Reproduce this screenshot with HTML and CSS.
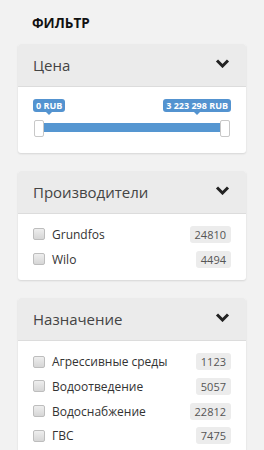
FILE: index.html
```html
<!DOCTYPE html>
<html lang="ru">
<head>
    <meta charset="UTF-8">
    <meta name="viewport" content="width=device-width, initial-scale=1.0">
    <title>Фильтр</title>
    <link rel="stylesheet" href="styles.css">
</head>
<body>
    <div class="filter">
        <h2 class="filter-title">ФИЛЬТР</h2>

        <div class="panel">
            <div class="panel-head">
                <span>Цена</span>
                <svg class="chevron" width="15" height="9" viewBox="0 0 15 9"><path d="M2 1.5 L7.5 7 L13 1.5" fill="none" stroke="#222" stroke-width="3"/></svg>
            </div>
            <div class="panel-body price-body">
                <div class="slider">
                    <span class="tip tip-min">0 RUB</span>
                    <span class="tip tip-max">3 223 298 RUB</span>
                    <div class="track"></div>
                    <span class="handle handle-min"></span>
                    <span class="handle handle-max"></span>
                </div>
            </div>
        </div>

        <div class="panel">
            <div class="panel-head">
                <span>Производители</span>
                <svg class="chevron" width="15" height="9" viewBox="0 0 15 9"><path d="M2 1.5 L7.5 7 L13 1.5" fill="none" stroke="#222" stroke-width="3"/></svg>
            </div>
            <ul class="panel-body options">
                <li><span class="check"></span><span class="name">Grundfos</span><span class="count">24810</span></li>
                <li><span class="check"></span><span class="name">Wilo</span><span class="count">4494</span></li>
            </ul>
        </div>

        <div class="panel">
            <div class="panel-head">
                <span>Назначение</span>
                <svg class="chevron" width="15" height="9" viewBox="0 0 15 9"><path d="M2 1.5 L7.5 7 L13 1.5" fill="none" stroke="#222" stroke-width="3"/></svg>
            </div>
            <ul class="panel-body options">
                <li><span class="check"></span><span class="name">Агрессивные среды</span><span class="count">1123</span></li>
                <li><span class="check"></span><span class="name">Водоотведение</span><span class="count">5057</span></li>
                <li><span class="check"></span><span class="name">Водоснабжение</span><span class="count">22812</span></li>
                <li><span class="check"></span><span class="name">ГВС</span><span class="count">7475</span></li>
            </ul>
        </div>
    </div>
</body>
</html>
```

FILE: styles.css
```css
body {
    margin: 0;
    padding: 0;
    background-color: #f2f2f2;
    font-family: "Open Sans", "Noto Sans", sans-serif;
    color: #333;
}

.filter {
    padding: 0 18px;
}

.filter-title {
    margin: 0;
    padding: 14px 0 0 14px;
    height: 30px;
    font-size: 13.5px;
    font-weight: bold;
    color: #111;
    line-height: 18px;
}

.panel {
    background: #fff;
    border-radius: 3px;
    box-shadow: 0 1px 2px rgba(0, 0, 0, 0.12);
    margin-bottom: 18px;
    overflow: hidden;
}

.panel-head {
    display: flex;
    align-items: center;
    justify-content: space-between;
    height: 42px;
    padding: 0 16px 0 15px;
    background: #ebebeb;
    border-bottom: 1px solid #dcdcdc;
    font-size: 15px;
    color: #444;
}

.chevron {
    margin-top: -4px;
}

.panel-body {
    margin: 0;
    list-style: none;
}

.price-body {
    padding: 12px 15px 16px;
}

.slider {
    position: relative;
    height: 38px;
}

.tip {
    position: absolute;
    top: 0;
    height: 13px;
    padding: 0 3px;
    background: #5393d0;
    color: #fff;
    font-size: 9px;
    font-weight: bold;
    line-height: 13px;
    border-radius: 3px;
}

.tip::after {
    content: "";
    position: absolute;
    left: 50%;
    bottom: -3px;
    margin-left: -3px;
    border-left: 3px solid transparent;
    border-right: 3px solid transparent;
    border-top: 3px solid #5393d0;
}

.tip-min {
    left: 0;
}

.tip-max {
    right: 0;
}

.track {
    position: absolute;
    top: 24px;
    left: 6px;
    right: 6px;
    height: 9px;
    background: #5596d1;
}

.handle {
    position: absolute;
    top: 21px;
    width: 8px;
    height: 15px;
    background: #fff;
    border: 1px solid #c8c8c8;
    border-radius: 2px;
}

.handle-min {
    left: 1px;
}

.handle-max {
    right: 1px;
}

.options {
    padding: 8px 15px 9px 15px;
}

.options li {
    display: flex;
    align-items: center;
    height: 24.7px;
    font-size: 12px;
    color: #333;
}

.check {
    width: 10px;
    height: 10px;
    border: 1px solid #bdbdbd;
    border-radius: 2px;
    background: linear-gradient(#eeeeee, #d6d6d6);
    margin-right: 7px;
}

.name {
    flex: 1;
}

.count {
    height: 17px;
    padding: 0 5px;
    background: #ececec;
    border-radius: 3px;
    font-size: 11px;
    color: #555;
    line-height: 17px;
}
```
